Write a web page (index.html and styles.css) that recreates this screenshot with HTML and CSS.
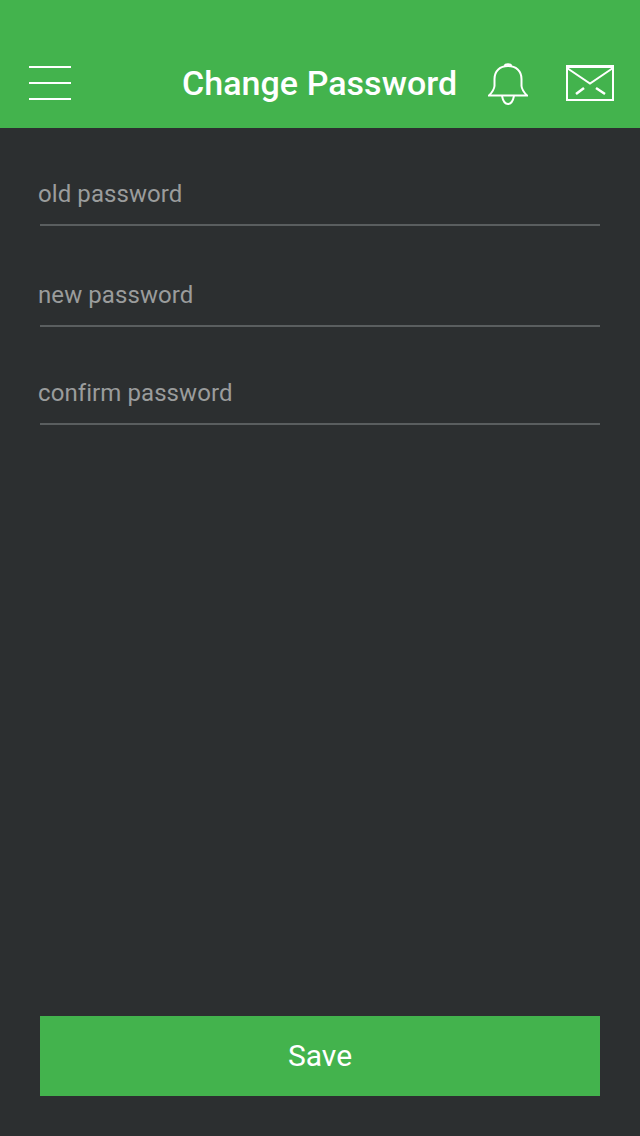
FILE: index.html
```html
<!DOCTYPE html>
<html lang="en">
<head>
    <meta charset="UTF-8">
    <meta name="viewport" content="width=device-width, initial-scale=1.0">
    <title>Change Password</title>
    <link rel="stylesheet" href="styles.css">
</head>
<body>
    <div class="page">
        <header class="topbar">
            <button class="menu-btn" type="button" aria-label="Menu">
                <span></span><span></span><span></span>
            </button>
            <h1>Change Password</h1>
            <svg class="bell" width="40" height="42" viewBox="0 0 40 42" fill="none" stroke="#fff" stroke-width="2">
                <path d="M1 32.500h38c-2-2-5-5-5.500-9.500v-7C33.500 8 28 3 20 3S6.500 8 6.500 16v7C6 27.500 3 30.500 1 32.500z"/>
                <path d="M16.800 3C17.300.8 22.700.8 23.200 3"/>
                <path d="M14 33c1 5 3 8 6 8s5-3 6-8"/>
            </svg>
            <svg class="mail" width="48" height="36" viewBox="0 0 48 36" fill="none" stroke="#fff" stroke-width="2">
                <path d="M0 1.500h48" stroke-width="3"/>
                <path d="M1 2v33h46V2"/>
                <path d="M1 3L24 18.500 47 3"/>
                <path d="M10 29l8-6M39 29l-9-6" stroke-width="2.500"/>
            </svg>
        </header>

        <main class="form">
            <div class="field">
                <input type="text" placeholder="old password">
            </div>
            <div class="field field-tall">
                <input type="text" placeholder="new password">
            </div>
            <div class="field">
                <input type="text" placeholder="confirm password">
            </div>
            <button class="save-btn" type="button">Save</button>
        </main>
    </div>
</body>
</html>
```

FILE: styles.css
```css
* {
    box-sizing: border-box;
}
body {
    margin: 0;
    background-color: #2c2f30;
    font-family: Roboto, sans-serif;
}
.page {
    display: flex;
    flex-direction: column;
    height: 1136px;
    overflow: hidden;
}
.topbar {
    display: flex;
    align-items: flex-start;
    height: 128px;
    padding: 63px 26px 0 29px;
    background-color: #43b34d;
}
.menu-btn {
    display: flex;
    flex-direction: column;
    gap: 14px;
    width: 42px;
    margin-top: 3px;
    padding: 0;
    background: none;
    border: none;
}
.menu-btn span {
    display: block;
    height: 2px;
    background-color: #fff;
}
.topbar h1 {
    width: 275px;
    margin: 0 0 0 111px;
    color: #fff;
    font-size: 34px;
    font-weight: 500;
    letter-spacing: 0.05px;
    line-height: 40px;
    white-space: nowrap;
}
.bell {
    flex-shrink: 0;
    margin-left: 31px;
}
.mail {
    flex-shrink: 0;
    margin-top: 2px;
    margin-left: 38px;
}
.form {
    display: flex;
    flex: 1;
    flex-direction: column;
    padding: 0 40px 40px;
}
.field {
    height: 98px;
    border-bottom: 2px solid #5a5e5f;
}
.field input {
    display: block;
    width: 100%;
    height: 100%;
    margin-left: -2px;
    padding: 36px 0 0;
    background: none;
    border: none;
    outline: none;
    color: #9a9c9c;
    font-family: inherit;
    font-size: 24px;
    letter-spacing: 0.08px;
}
.field-tall {
    height: 101px;
}
.field-tall input {
    padding-top: 39px;
}
.field input::placeholder {
    color: #9a9c9c;
    opacity: 1;
}
.save-btn {
    height: 80px;
    margin-top: auto;
    padding: 0 0 2px;
    background-color: #43b34d;
    border: none;
    color: #fff;
    font-family: inherit;
    font-size: 30px;
}
```
